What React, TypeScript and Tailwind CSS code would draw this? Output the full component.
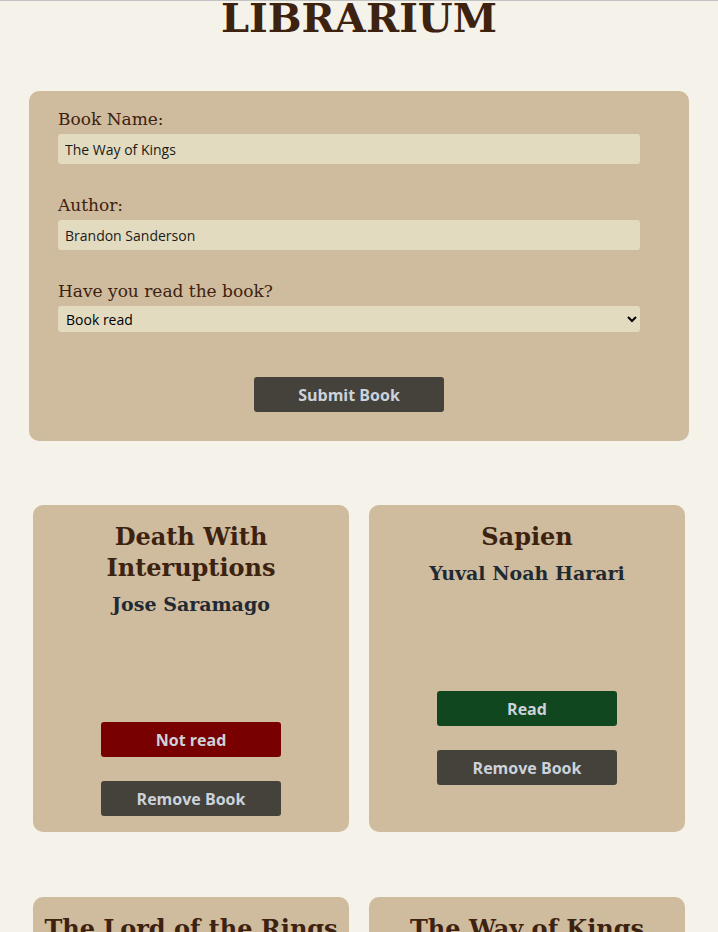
import React from "react";

const books = [
  { title: "Death With Interuptions", author: "Jose Saramago", read: false },
  { title: "Sapien", author: "Yuval Noah Harari", read: true },
  { title: "The Lord of the Rings", author: "J. R. R. Tolkien", read: true },
  { title: "The Way of Kings", author: "Brandon Sanderson", read: true },
];

const serif = "font-['DejaVu_Serif',serif]";
const sans = "font-['Open_Sans','Noto_Sans',sans-serif]";

export default function App() {
  return (
    <div className="min-h-[932px] bg-[#f5f2ea] border-t border-[#c4c4c4]">
      <h1 className="text-center text-[40px] leading-[36px] font-bold text-[#3d2210] -mt-[1px] font-['DejaVu_Serif',serif]">
        LIBRARIUM
      </h1>

      <form
        className="mx-[29px] mt-[55px] rounded-[10px] bg-[#cfbb9d] pl-[29px] pr-[49px] pt-[18px] pb-[29px] flex flex-col"
        onSubmit={(e) => e.preventDefault()}
      >
        <label className="text-[17px] leading-[21px] text-[#3d2210] font-['DejaVu_Serif',serif]">
          Book Name:
        </label>
        <input
          className="mt-[4px] h-[30px] rounded-[3px] bg-[#e3dbc0] px-[7px] text-[14px] text-[#1b1b1b] outline-none font-['Open_Sans','Noto_Sans',sans-serif]"
          defaultValue="The Way of Kings"
        />
        <label className="mt-[31px] text-[17px] leading-[20px] text-[#3d2210] font-['DejaVu_Serif',serif]">
          Author:
        </label>
        <input
          className="mt-[5px] h-[30px] rounded-[3px] bg-[#e3dbc0] px-[7px] text-[14px] text-[#1b1b1b] outline-none font-['Open_Sans','Noto_Sans',sans-serif]"
          defaultValue="Brandon Sanderson"
        />
        <label className="mt-[31px] text-[17px] leading-[20px] text-[#3d2210] font-['DejaVu_Serif',serif]">
          Have you read the book?
        </label>
        <select
          className="mt-[5px] h-[26px] rounded-[3px] bg-[#e3dbc0] px-[4px] text-[14px] text-black outline-none font-['Open_Sans','Noto_Sans',sans-serif]"
          defaultValue="read"
        >
          <option value="read">Book read</option>
          <option value="notread">Book not read</option>
        </select>
        <div className="mt-[45px] flex justify-center">
          <button
            type="submit"
            className="h-[35px] w-[190px] rounded-[3px] bg-[#44423a] text-[16px] font-bold text-[#ccd2dc] font-['Open_Sans','Noto_Sans',sans-serif]"
          >
            Submit Book
          </button>
        </div>
      </form>

      <div className="mx-[33px] mt-[64px] grid grid-cols-2 gap-x-[20px] gap-y-[65px] pb-[40px]">
        {books.map((b) => (
          <div
            key={b.title}
            className="flex flex-col items-center rounded-[10px] bg-[#cfbb9d] px-[6px] pt-[16px] pb-[16px]"
          >
            <h2 className={`text-center text-[24px] leading-[31px] font-bold text-[#3d2210] ${serif}`}>
              {b.title}
            </h2>
            <h3 className={`mt-[10px] text-center text-[19px] leading-[22px] font-bold text-[#1f2a33] ${serif}`}>
              {b.author}
            </h3>
            <button
              className={`mt-[107px] h-[35px] w-[180px] rounded-[3px] text-[16px] font-bold text-[#ccd2dc] ${sans} ${
                b.read ? "bg-[#10471f]" : "bg-[#780000]"
              }`}
            >
              {b.read ? "Read" : "Not read"}
            </button>
            <button
              className={`mt-[24px] h-[35px] w-[180px] rounded-[3px] bg-[#44423a] text-[16px] font-bold text-[#ccd2dc] ${sans}`}
            >
              Remove Book
            </button>
          </div>
        ))}
      </div>
    </div>
  );
}
